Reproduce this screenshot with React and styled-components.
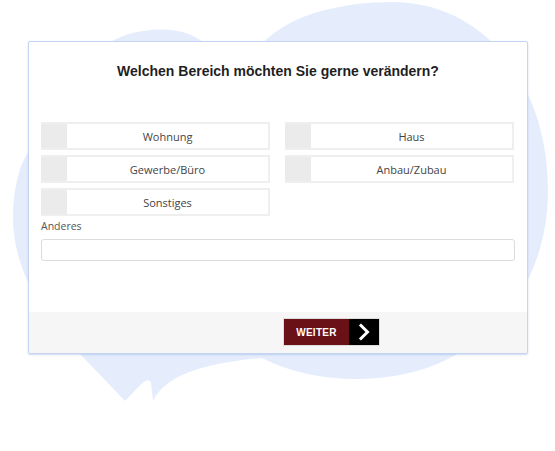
import React from 'react';
import styled, { createGlobalStyle } from 'styled-components';

const GlobalStyle = createGlobalStyle`
  html, body {
    margin: 0;
    padding: 0;
    background: #ffffff;
  }
  * {
    box-sizing: border-box;
  }
`;

const Stage = styled.div`
  position: relative;
  width: 555px;
  height: 451px;
  overflow: hidden;
  padding: 41px 0 0 28px;
  font-family: 'Open Sans', 'Noto Sans', sans-serif;
`;

const Blob = styled.svg`
  position: absolute;
  left: 0;
  top: 0;
  z-index: 0;
`;

const Card = styled.section`
  position: relative;
  z-index: 1;
  width: 500px;
  background: #ffffff;
  border: 1px solid #c3d5f2;
  border-radius: 2px;
  box-shadow: 0 1px 2px rgba(120, 150, 200, 0.35);
`;

const Body = styled.div`
  height: 270px;
  padding: 20px 12px 0 12px;
`;

const Title = styled.h1`
  margin: 0 0 42px;
  text-align: center;
  font-family: 'Liberation Sans', Arial, sans-serif;
  font-size: 14px;
  line-height: 18px;
  font-weight: 700;
  letter-spacing: 0;
  color: #1f1f1f;
`;

const Options = styled.div`
  display: grid;
  grid-template-columns: 229px 229px;
  grid-auto-rows: 28px;
  column-gap: 15px;
  row-gap: 5px;
`;

const Option = styled.button`
  display: flex;
  align-items: stretch;
  padding: 0;
  border: 2px solid #efefef;
  border-left: none;
  background: #ffffff;
  cursor: pointer;
  font-family: inherit;
`;

const Check = styled.span`
  flex: 0 0 26px;
  background: #ebebeb;
`;

const OptionLabel = styled.span`
  flex: 1;
  display: flex;
  align-items: center;
  justify-content: center;
  font-size: 11px;
  color: #444444;
`;

const FieldLabel = styled.label`
  display: block;
  margin-top: 4px;
  font-size: 10.5px;
  line-height: 13px;
  color: #555555;
`;

const TextInput = styled.input`
  display: block;
  width: 100%;
  height: 22px;
  margin-top: 6px;
  border: 1px solid #dcdcdc;
  border-radius: 3px;
  background: #ffffff;
  outline: none;
`;

const Footer = styled.footer`
  height: 41px;
  background: #f6f6f6;
  padding: 6px 0 0 calc(50% + 5px);
`;

const NextButton = styled.button`
  display: flex;
  height: 28px;
  padding: 0;
  border: 1px solid #dddddd;
  background: #000000;
  cursor: pointer;
`;

const NextText = styled.span`
  width: 65px;
  display: flex;
  align-items: center;
  justify-content: center;
  background: #6a1017;
  color: #ffffff;
  font-family: 'Liberation Sans', Arial, sans-serif;
  font-weight: 700;
  font-size: 10px;
  letter-spacing: 0.3px;
`;

const NextArrow = styled.span`
  width: 30px;
  display: flex;
  align-items: center;
  justify-content: center;
  background: #000000;
`;

const options = ['Wohnung', 'Haus', 'Gewerbe/Büro', 'Anbau/Zubau', 'Sonstiges'];

export default function App() {
  return (
    <>
      <GlobalStyle />
      <Stage>
        <Blob width="555" height="451" viewBox="0 0 555 451">
          <path
            fill="#e5edfd"
            d="M 108 44
               C 125 30, 180 20, 205 44
               L 262 44
               C 290 14, 340 2, 395 2
               C 490 4, 548 90, 548 190
               C 548 300, 470 378, 360 379
               C 320 379, 290 372, 262 358
               C 220 362, 168 370, 153 401
               L 151 383
               C 148 374, 138 388, 125 401
               L 80 354
               C 45 320, 12 270, 13 215
               C 14 180, 22 160, 30 150
               L 30 44 Z"
          />
        </Blob>
        <Card>
          <Body>
            <Title>Welchen Bereich möchten Sie gerne verändern?</Title>
            <Options>
              {options.map((label) => (
                <Option key={label} type="button">
                  <Check />
                  <OptionLabel>{label}</OptionLabel>
                </Option>
              ))}
            </Options>
            <FieldLabel htmlFor="anderes">Anderes</FieldLabel>
            <TextInput id="anderes" type="text" />
          </Body>
          <Footer>
            <NextButton type="button">
              <NextText>WEITER</NextText>
              <NextArrow>
                <svg width="12" height="18" viewBox="0 0 12 18">
                  <polyline
                    points="3,2.5 9.5,9 3,15.5"
                    fill="none"
                    stroke="#ffffff"
                    strokeWidth="3"
                    strokeLinecap="square"
                  />
                </svg>
              </NextArrow>
            </NextButton>
          </Footer>
        </Card>
      </Stage>
    </>
  );
}
